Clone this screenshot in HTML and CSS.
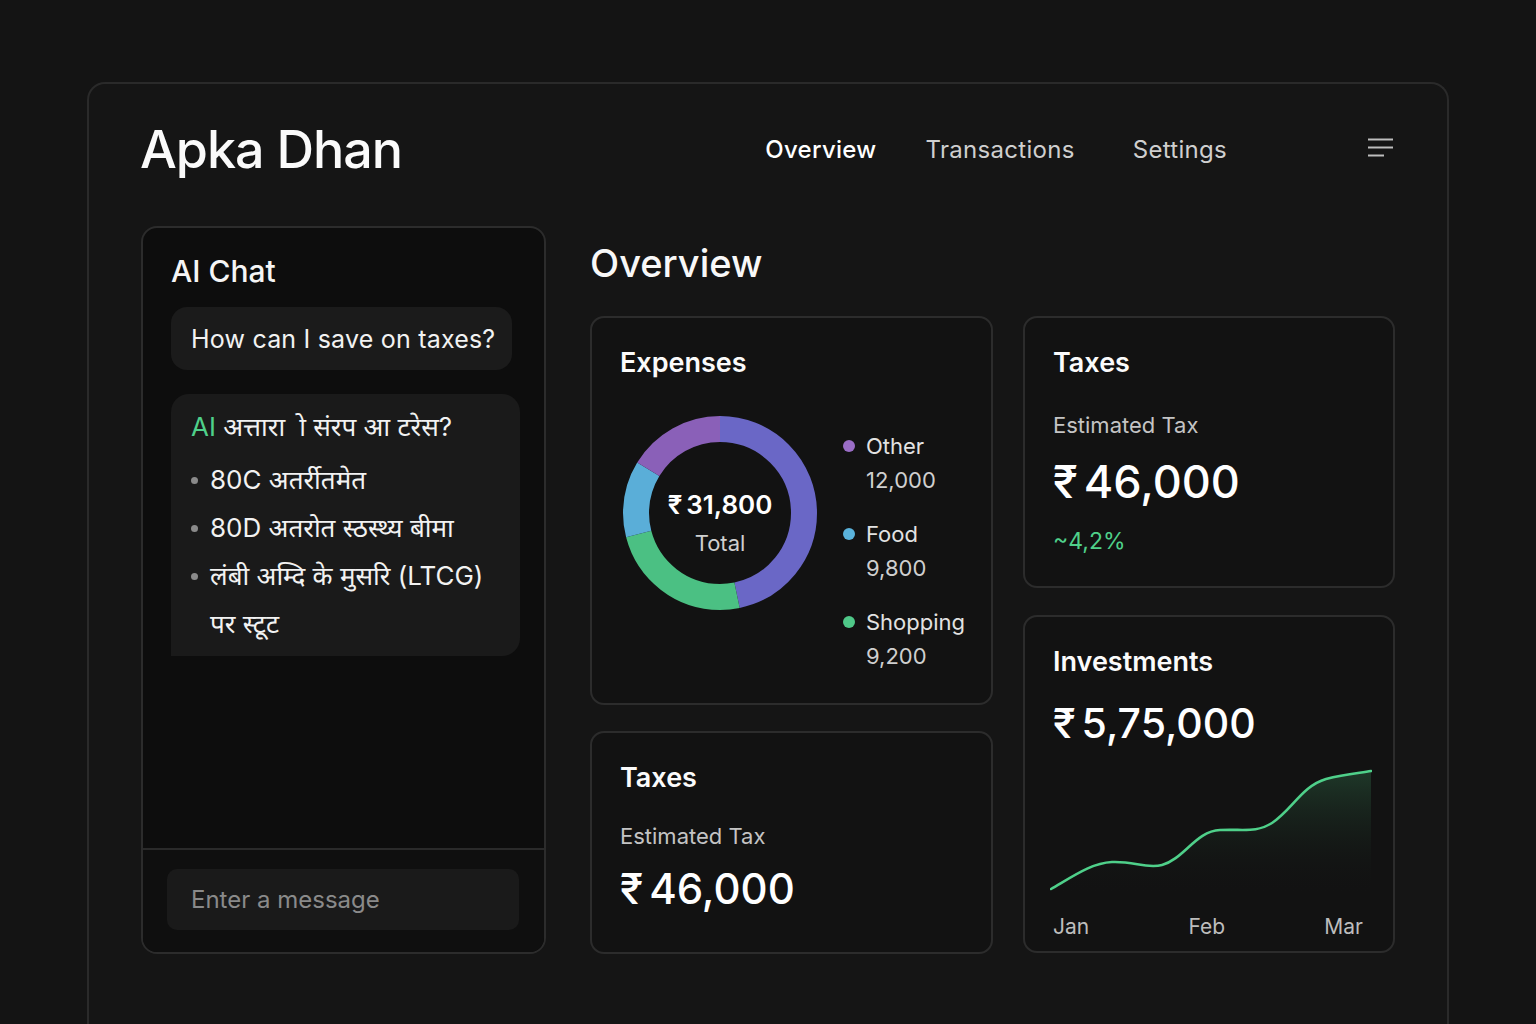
FILE: index.html
```html
<!DOCTYPE html>
<html lang="en">
<head>
<meta charset="utf-8">
<title>Apka Dhan</title>
<link rel="stylesheet" href="styles.css">
</head>
<body>
<div class="frame">
  <header class="header">
    <h1 class="brand">Apka Dhan</h1>
    <nav class="nav">
      <a class="nav-link active">Overview</a>
      <a class="nav-link nl-tx">Transactions</a>
      <a class="nav-link nl-set">Settings</a>
    </nav>
    <svg class="menu" width="26" height="20" viewBox="0 0 26 20">
      <line x1="0" y1="1.5" x2="25" y2="1.5" stroke="#bdbdbd" stroke-width="2"/>
      <line x1="0" y1="9.5" x2="25" y2="9.5" stroke="#bdbdbd" stroke-width="2"/>
      <line x1="0" y1="17.5" x2="16" y2="17.5" stroke="#bdbdbd" stroke-width="2"/>
    </svg>
  </header>

  <main class="main">
    <section class="chat">
      <div class="chat-body">
        <h2 class="chat-title">AI Chat</h2>
        <div class="bubble user">How can I save on taxes?</div>
        <div class="bubble ai">
          <p class="ai-line"><span class="ai-tag">AI</span> अत्तारा &nbsp;ो संरप आ टरेस?</p>
          <ul class="ai-list">
            <li>80C अतर्रीतमेत</li>
            <li>80D अतरोत स्ठस्थ्य बीमा</li>
            <li>लंबी अम्दि के मुसरि (LTCG) पर स्टूट</li>
          </ul>
        </div>
      </div>
      <div class="chat-foot">
        <div class="chat-input">Enter a message</div>
      </div>
    </section>

    <section class="overview">
      <h2 class="ov-title">Overview</h2>
      <div class="cols">
        <div class="col col-left">
          <div class="card expenses">
            <h3 class="card-title">Expenses</h3>
            <div class="exp-body">
              <div class="donut">
                <svg width="196" height="196" viewBox="0 0 196 196">
                  <g transform="rotate(-90 98 98)" fill="none" stroke-width="26">
                    <circle cx="98" cy="98" r="84" stroke="#6a67c6" stroke-dasharray="246.3 281.5" stroke-dashoffset="0"/>
                    <circle cx="98" cy="98" r="84" stroke="#4bc083" stroke-dasharray="127.5 400.3" stroke-dashoffset="-246.3"/>
                    <circle cx="98" cy="98" r="84" stroke="#5aaed8" stroke-dasharray="67.4 460.4" stroke-dashoffset="-373.8"/>
                    <circle cx="98" cy="98" r="84" stroke="#8a60b8" stroke-dasharray="86.6 441.2" stroke-dashoffset="-441.2"/>
                  </g>
                </svg>
                <div class="donut-center">
                  <div class="donut-val"><span class="rs">₹</span>31,800</div>
                  <div class="donut-lbl">Total</div>
                </div>
              </div>
              <ul class="legend">
                <li><span class="dot d-other"></span><span class="lg-name">Other</span><span class="lg-val">12,000</span></li>
                <li><span class="dot d-food"></span><span class="lg-name">Food</span><span class="lg-val">9,800</span></li>
                <li><span class="dot d-shop"></span><span class="lg-name">Shopping</span><span class="lg-val">9,200</span></li>
              </ul>
            </div>
          </div>
          <div class="card taxes-b">
            <h3 class="card-title">Taxes</h3>
            <div class="sub">Estimated Tax</div>
            <div class="big b2"><span class="rs">₹</span>46,000</div>
          </div>
        </div>
        <div class="col col-right">
          <div class="card taxes-a">
            <h3 class="card-title">Taxes</h3>
            <div class="sub">Estimated Tax</div>
            <div class="big"><span class="rs">₹</span>46,000</div>
            <div class="delta">~4,2%</div>
          </div>
          <div class="card invest">
            <h3 class="card-title">Investments</h3>
            <div class="big b3"><span class="rs">₹</span>5,75,000</div>
            <svg class="chart" width="322" height="132" viewBox="0 0 322 132">
              <defs>
                <linearGradient id="g" x1="0" y1="0" x2="0" y2="1">
                  <stop offset="0" stop-color="#1f3a2a" stop-opacity="0.95"/>
                  <stop offset="1" stop-color="#131313" stop-opacity="0"/>
                </linearGradient>
              </defs>
              <path d="M1,127 C25,113 42,101 62,100 C84,99 96,107 112,103 C134,97 146,69 170,68 C195,67 206,71 222,61 C242,48 252,24 276,17 C295,12 310,11 321,9 L321,132 L1,132 Z" fill="url(#g)"/>
              <path d="M1,127 C25,113 42,101 62,100 C84,99 96,107 112,103 C134,97 146,69 170,68 C195,67 206,71 222,61 C242,48 252,24 276,17 C295,12 310,11 321,9" fill="none" stroke="#4fd08a" stroke-width="2.6" stroke-linecap="round"/>
            </svg>
            <div class="months"><span>Jan</span><span>Feb</span><span>Mar</span></div>
          </div>
        </div>
      </div>
    </section>
  </main>
</div>
</body>
</html>
```

FILE: styles.css
```css
* { box-sizing: border-box; }
html, body {
  margin: 0;
  padding: 0;
  background: #141414;
  height: 100%;
  overflow: hidden;
}
body {
  font-family: Inter, "Noto Sans", "Noto Sans Devanagari", "DejaVu Sans", sans-serif;
  color: #f2f2f2;
}
h1, h2, h3, p, ul { margin: 0; padding: 0; }
ul { list-style: none; }

.frame {
  margin: 82px 0 0 87px;
  width: 1362px;
  height: 1000px;
  border: 2px solid #2a2a2a;
  border-bottom: none;
  border-radius: 18px 18px 0 0;
  background: #151515;
  padding: 0 52px 0 52px;
}

.header {
  display: flex;
  align-items: center;
  height: 130px;
}
.brand {
  font-size: 52px;
  font-weight: 500;
  letter-spacing: -1px;
  color: #fafafa;
  margin-left: -1px;
}
.nav {
  display: flex;
  margin-left: auto;
  margin-right: 141px;
}
.nav-link {
  font-size: 24px;
  color: #cfcfcf;
  font-weight: 400;
  letter-spacing: 0.3px;
}
.nav-link.active { color: #fff; font-weight: 500; }
.nl-tx { margin-left: 49px; }
.nl-set { margin-left: 58px; }
.menu { display: block; margin-top: -2px; margin-right: 1px; }

.main {
  display: flex;
  margin-top: 12px;
  gap: 44px;
}

.chat {
  width: 405px;
  flex-shrink: 0;
  height: 728px;
  background: #0d0d0d;
  border: 2px solid #2c2c2c;
  border-radius: 16px;
  display: flex;
  flex-direction: column;
  overflow: hidden;
}
.chat-body {
  flex: 1;
  padding: 23px 25px 0 28px;
}
.chat-title {
  font-size: 30px;
  font-weight: 500;
  line-height: 40px;
  color: #f5f5f5;
  margin-bottom: 16px;
}
.bubble {
  background: #1b1b1b;
  border-radius: 16px;
}
.bubble.user {
  width: 341px;
  height: 63px;
  display: flex;
  align-items: center;
  padding-left: 20px;
  font-size: 25px;
  letter-spacing: 0.2px;
  color: #f2f2f2;
}
.bubble.ai {
  margin-top: 24px;
  width: 349px;
  height: 262px;
  border-radius: 18px 18px 18px 0;
  padding: 14px 16px 0 20px;
  background: #1a1a1a;
}
.ai-line {
  font-size: 26px;
  line-height: 38px;
  color: #f2f2f2;
}
.ai-tag { color: #4fd08a; }
.ai-list { margin-top: 10px; }
.ai-list li {
  position: relative;
  padding-left: 19px;
  font-size: 26px;
  line-height: 48px;
  color: #f2f2f2;
}
.ai-list li::before {
  content: "";
  position: absolute;
  left: 0;
  top: 21px;
  width: 7px;
  height: 7px;
  border-radius: 50%;
  background: #8a8a8a;
}
.chat-foot {
  height: 104px;
  border-top: 2px solid #2a2a2a;
  padding: 19px 25px 0 24px;
  background: #0f0f0f;
}
.chat-input {
  height: 61px;
  border-radius: 10px;
  background: #1a1a1a;
  display: flex;
  align-items: center;
  padding-left: 24px;
  font-size: 24px;
  color: #8a8a8a;
}

.overview { width: 805px; flex-shrink: 0; min-width: 0; }
.ov-title {
  font-size: 38px;
  font-weight: 500;
  line-height: 48px;
  margin-top: 13px;
  color: #f8f8f8;
}
.cols {
  display: flex;
  gap: 30px;
  margin-top: 29px;
}
.col { display: flex; flex-direction: column; flex-shrink: 0; min-width: 0; }
.col-left { width: 403px; gap: 26px; }
.col-right { width: 372px; gap: 27px; }

.card {
  background: #121212;
  border: 2px solid #2c2c2c;
  border-radius: 14px;
  padding: 28px 28px 0 28px;
  min-width: 0;
}
.card-title {
  font-size: 27px;
  font-weight: 600;
  line-height: 34px;
  color: #fbfbfb;
}
.rs { margin-right: 6px; }
.expenses { height: 389px; }
.exp-body {
  display: flex;
  margin-top: 20px;
}
.donut {
  position: relative;
  width: 196px;
  height: 196px;
  margin-left: 2px;
  margin-top: 15px;
  flex: 0 0 196px;
}
.donut svg { display: block; }
.donut-center {
  position: absolute;
  inset: 0;
  display: flex;
  flex-direction: column;
  align-items: center;
  justify-content: center;
  padding-top: 20px;
}
.donut-val { font-size: 26px; font-weight: 600; line-height: 34px; color: #fff; }
.donut-val .rs { margin-right: 4px; }
.donut-lbl { font-size: 22px; color: #d0d0d0; line-height: 32px; margin-top: 5px; }
.legend {
  margin-left: 25px;
  display: flex;
  flex-direction: column;
  gap: 22px;
  margin-top: 30px;
}
.legend li {
  display: grid;
  grid-template-columns: 23px auto;
  align-items: center;
  row-gap: 2px;
}
.dot { width: 12px; height: 12px; border-radius: 50%; }
.d-other { background: #9a6dc6; }
.d-food { background: #5ab3dc; }
.d-shop { background: #4fc888; }
.lg-name { font-size: 22px; color: #e2e2e2; line-height: 32px; }
.lg-val { grid-column: 2; font-size: 22px; color: #cfcfcf; line-height: 32px; }

.taxes-b { height: 223px; }
.taxes-a { height: 272px; }
.invest { height: 338px; padding-top: 28px; overflow: visible; }
.sub {
  font-size: 22px;
  color: #c4c4c4;
  margin-top: 26px;
  line-height: 30px;
}
.taxes-a .sub { margin-top: 30px; }
.big {
  font-size: 45px;
  font-weight: 500;
  line-height: 56px;
  margin-top: 14px;
  color: #fff;
}
.big.b2 { font-size: 42px; margin-top: 10px; }
.big.b3 { font-size: 41px; margin-top: 16px; }
.delta {
  font-size: 23px;
  color: #4fd08a;
  margin-top: 16px;
  line-height: 30px;
}
.chart {
  display: block;
  margin-top: 11px;
  margin-left: -3px;
}
.months {
  display: flex;
  justify-content: space-between;
  font-size: 21px;
  color: #bdbdbd;
  margin-top: 20px;
  padding-right: 2px;
}
```
